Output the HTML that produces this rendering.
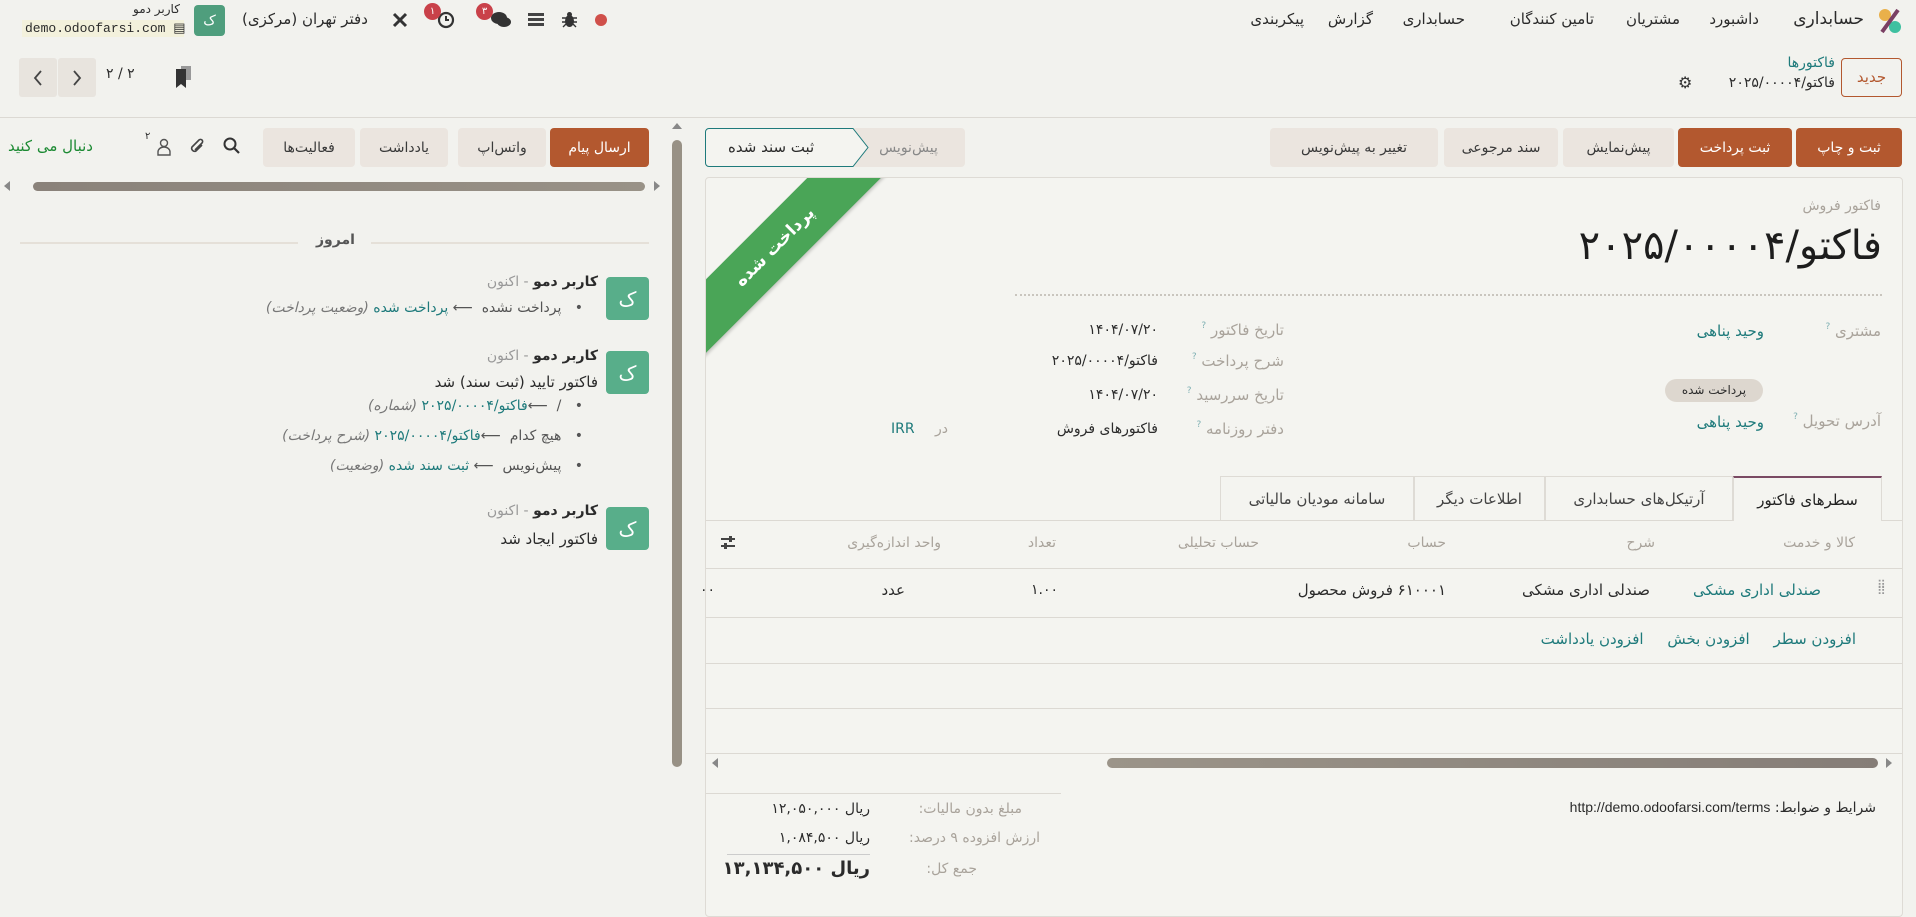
<!DOCTYPE html>
<html lang="fa"><head><meta charset="utf-8">
<style>
*{box-sizing:border-box;margin:0;padding:0}
body{width:1916px;height:895px;overflow:hidden;background:#f2f2ee;font-family:"DejaVu Sans","Liberation Sans",sans-serif;color:#2b2b2b;font-size:14px;position:relative}
.a{position:absolute;white-space:nowrap}
.r{direction:rtl}
.btn{position:absolute;height:39px;top:128px;border-radius:4px;background:#ebe5df;color:#3a3a3a;display:flex;align-items:center;justify-content:center;font-size:14px;direction:rtl;white-space:nowrap}
.pri{background:#b3582f;color:#fff}
.lbl{color:#a9a39b}
.q{color:#7fb0b3;font-size:9px;vertical-align:top}
.teal{color:#1e7a7b}
.line{position:absolute;height:1px;background:#dcd9d3}
.av{position:absolute;width:43px;height:43px;border-radius:4px;background:#58ae8a;color:#fff;font-size:20px;display:flex;align-items:center;justify-content:center}
.gray{color:#999}
.it{font-style:italic;color:#777}
</style></head><body>

<!-- top bar -->
<svg class="a" style="left:1878px;top:8px" width="24" height="26" viewBox="0 0 24 26"><circle cx="7" cy="7" r="6" fill="#e9b04a"/><circle cx="17" cy="19" r="6" fill="#3fc0a0"/><path d="M20 2 L4 24" stroke="#7a3f63" stroke-width="4"/></svg>
<div class="a r" style="right:52px;top:9px;font-size:17px">حسابداری</div>
<div class="a r" style="right:157px;top:10px;font-size:15px">داشبورد</div>
<div class="a r" style="right:236px;top:10px;font-size:15px">مشتریان</div>
<div class="a r" style="right:322px;top:10px;font-size:15px">تامین کنندگان</div>
<div class="a r" style="right:451px;top:10px;font-size:15px">حسابداری</div>
<div class="a r" style="right:543px;top:10px;font-size:15px">گزارش</div>
<div class="a r" style="right:612px;top:10px;font-size:15px">پیکربندی</div>

<div class="a" style="left:595px;top:14px;width:12px;height:12px;border-radius:50%;background:#d0504a"></div>
<svg class="a" style="left:562px;top:11px" width="15" height="17" viewBox="0 0 15 17"><ellipse cx="7.5" cy="10" rx="4.5" ry="6" fill="#333"/><circle cx="7.5" cy="3.5" r="2.5" fill="#333"/><path d="M0 7h15M0 11h15M1 16l3-3M14 16l-3-3" stroke="#333" stroke-width="1.4"/></svg>
<svg class="a" style="left:528px;top:12px" width="16" height="16" viewBox="0 0 16 16"><rect x="0" y="1" width="16" height="3" fill="#444"/><rect x="0" y="6" width="16" height="3" fill="#444"/><rect x="0" y="11" width="16" height="3" fill="#444"/></svg>
<svg class="a" style="left:490px;top:11px" width="22" height="18" viewBox="0 0 22 18"><ellipse cx="9" cy="7" rx="8" ry="6" fill="#333"/><ellipse cx="14" cy="11" rx="7" ry="5" fill="#333"/></svg>
<div class="a" style="left:476px;top:3px;width:17px;height:17px;border-radius:50%;background:#c94149;color:#fff;font-size:10px;text-align:center;line-height:17px">۳</div>
<svg class="a" style="left:437px;top:11px" width="18" height="18" viewBox="0 0 18 18"><circle cx="9" cy="9" r="7" fill="none" stroke="#333" stroke-width="2.2"/><path d="M9 5v4h3" stroke="#333" stroke-width="2" fill="none"/></svg>
<div class="a" style="left:424px;top:3px;width:17px;height:17px;border-radius:50%;background:#c94149;color:#fff;font-size:10px;text-align:center;line-height:17px">۱</div>
<svg class="a" style="left:391px;top:11px" width="18" height="18" viewBox="0 0 18 18"><path d="M3 3l12 12M15 3L3 15" stroke="#333" stroke-width="3"/></svg>
<div class="a r" style="left:242px;top:10px;font-size:15px">دفتر تهران (مرکزی)</div>
<div class="av" style="left:194px;top:5px;width:31px;height:31px;font-size:14px;background:#4f9e7d">ک</div>
<div class="a r" style="left:133px;top:2px;font-size:12px">کاربر دمو</div>
<div class="a" style="left:22px;top:20px;width:162px;height:17px;background:#f3f1dc;font-family:'Liberation Mono',monospace;font-size:13px;line-height:17px;padding-left:3px">demo.odoofarsi.com ▤</div>

<!-- second row -->
<div class="a" style="left:19px;top:58px;width:38px;height:39px;background:#e8e4de;border-radius:3px"></div>
<svg class="a" style="left:31px;top:69px" width="14" height="18" viewBox="0 0 14 18"><path d="M10 2L4 9l6 7" fill="none" stroke="#444" stroke-width="1.8"/></svg>
<div class="a" style="left:58px;top:58px;width:38px;height:39px;background:#e8e4de;border-radius:3px"></div>
<svg class="a" style="left:70px;top:69px" width="14" height="18" viewBox="0 0 14 18"><path d="M4 2l6 7-6 7" fill="none" stroke="#444" stroke-width="1.8"/></svg>
<div class="a" style="left:106px;top:66px;font-size:14px">۲ / ۲</div>
<svg class="a" style="left:175px;top:66px" width="18" height="22" viewBox="0 0 18 22"><rect x="6" y="0" width="10" height="14" fill="#999"/><path d="M1 3h10v19l-5-4-5 4z" fill="#333"/></svg>

<div class="a r" style="left:1841px;top:58px;width:61px;height:39px;border:1px solid #b3582f;border-radius:4px;color:#b3582f;text-align:center;line-height:37px;font-size:15px">جدید</div>
<div class="a r teal" style="right:81px;top:55px;font-size:14px">فاکتورها</div>
<div class="a r" style="right:81px;top:75px;font-size:14px">فاکتو/۲۰۲۵/۰۰۰۰۴</div>
<div class="a" style="left:1678px;top:73px;font-size:16px;color:#333">⚙</div>
<div class="line" style="left:0;top:117px;width:1916px"></div>

<!-- chatter -->
<div class="btn pri" style="left:550px;width:99px">ارسال پیام</div>
<div class="btn" style="left:458px;width:88px">واتس‌اپ</div>
<div class="btn" style="left:360px;width:88px">یادداشت</div>
<div class="btn" style="left:263px;width:92px">فعالیت‌ها</div>
<svg class="a" style="left:223px;top:137px" width="18" height="18" viewBox="0 0 18 18"><circle cx="7" cy="7" r="5.5" fill="none" stroke="#333" stroke-width="2"/><path d="M11 11l5 5" stroke="#333" stroke-width="2.2"/></svg>
<svg class="a" style="left:187px;top:136px" width="20" height="20" viewBox="0 0 20 20"><path d="M15 9l-6 6a3 3 0 0 1-4-4l7-7a2 2 0 0 1 3 3l-7 7" fill="none" stroke="#444" stroke-width="1.6"/></svg>
<svg class="a" style="left:155px;top:138px" width="18" height="18" viewBox="0 0 18 18"><circle cx="9" cy="5" r="3.5" fill="none" stroke="#555" stroke-width="1.4"/><path d="M3 17v-3a6 5 0 0 1 12 0v3z" fill="none" stroke="#555" stroke-width="1.4"/></svg>
<div class="a" style="left:145px;top:131px;font-size:10px">۲</div>
<div class="a r" style="left:8px;top:137px;font-size:15px;color:#1c8a33">دنبال می کنید</div>

<div class="a" style="left:4px;top:181px;width:0;height:0;border-top:5px solid transparent;border-bottom:5px solid transparent;border-right:6px solid #888"></div>
<div class="a" style="left:33px;top:182px;width:612px;height:9px;border-radius:5px;background:linear-gradient(90deg,#8a827a,#999287)"></div>
<div class="a" style="left:654px;top:181px;width:0;height:0;border-top:5px solid transparent;border-bottom:5px solid transparent;border-left:6px solid #888"></div>
<div class="a" style="left:672px;top:123px;width:0;height:0;border-left:5px solid transparent;border-right:5px solid transparent;border-bottom:6px solid #888"></div>
<div class="a" style="left:672px;top:140px;width:10px;height:627px;border-radius:5px;background:#989185"></div>

<div class="a" style="left:20px;top:242px;width:278px;height:2px;background:#e5e0d8"></div>
<div class="a" style="left:371px;top:242px;width:278px;height:2px;background:#e5e0d8"></div>
<div class="a r" style="left:316px;top:232px;font-size:14px;color:#555;font-weight:bold">امروز</div>

<div class="av" style="left:606px;top:277px">ک</div>
<div class="a r" style="right:1318px;top:274px;font-size:14px"><b>کاربر دمو</b> <span class="gray">- اکنون</span></div>
<div class="a r" style="right:1333px;top:300px;font-size:14px;color:#555">• &nbsp;&nbsp;پرداخت نشده &nbsp;⟵ <span class="teal">پرداخت شده</span> <span class="it">(وضعیت پرداخت)</span></div>

<div class="av" style="left:606px;top:351px">ک</div>
<div class="a r" style="right:1318px;top:348px;font-size:14px"><b>کاربر دمو</b> <span class="gray">- اکنون</span></div>
<div class="a r" style="right:1318px;top:373px;font-size:15px">فاکتور تایید (ثبت سند) شد</div>
<div class="a r" style="right:1333px;top:398px;font-size:14px;color:#555">• &nbsp;&nbsp;/ &nbsp;⟵<span class="teal">فاکتو/۲۰۲۵/۰۰۰۰۴</span> <span class="it">(شماره)</span></div>
<div class="a r" style="right:1333px;top:428px;font-size:14px;color:#555">• &nbsp;&nbsp;هیچ کدام &nbsp;⟵<span class="teal">فاکتو/۲۰۲۵/۰۰۰۰۴</span> <span class="it">(شرح پرداخت)</span></div>
<div class="a r" style="right:1333px;top:458px;font-size:14px;color:#555">• &nbsp;&nbsp;پیش‌نویس &nbsp;⟵ <span class="teal">ثبت سند شده</span> <span class="it">(وضعیت)</span></div>

<div class="av" style="left:606px;top:507px">ک</div>
<div class="a r" style="right:1318px;top:503px;font-size:14px"><b>کاربر دمو</b> <span class="gray">- اکنون</span></div>
<div class="a r" style="right:1318px;top:530px;font-size:15px">فاکتور ایجاد شد</div>

<!-- form buttons -->
<div class="btn pri" style="left:1796px;width:106px">ثبت و چاپ</div>
<div class="btn pri" style="left:1678px;width:114px">ثبت پرداخت</div>
<div class="btn" style="left:1563px;width:111px">پیش‌نمایش</div>
<div class="btn" style="left:1444px;width:114px">سند مرجوعی</div>
<div class="btn" style="left:1270px;width:168px">تغییر به پیش‌نویس</div>
<div class="btn" style="left:852px;width:113px;color:#888">پیش‌نویس</div>
<svg class="a" style="left:705px;top:128px" width="165" height="39" viewBox="0 0 165 39"><path d="M4 .5H148L163 19.5 148 38.5H4A3.5 3.5 0 0 1 .5 35V4A3.5 3.5 0 0 1 4 .5z" fill="#f4f4f0" stroke="#1e7a7b"/></svg>
<div class="a r" style="left:728px;top:138px;font-size:15px">ثبت سند شده</div>

<!-- sheet -->
<div class="a" style="left:705px;top:177px;width:1198px;height:740px;background:#f4f4f0;border:1px solid #dedbd5;border-radius:4px;overflow:hidden">
  <div class="a" style="left:-131px;top:43px;width:400px;height:52px;background:#4aa557;transform:rotate(-45deg);color:#fff;font-weight:bold;font-size:17px;text-align:center;line-height:52px;direction:rtl;box-shadow:0 2px 3px rgba(0,0,0,.2)">پرداخت شده</div>
</div>

<div class="a r lbl" style="right:35px;top:198px;font-size:14px">فاکتور فروش</div>
<div class="a r" style="right:34px;top:223px;font-size:40px;color:#1d1d1d">فاکتو/۲۰۲۵/۰۰۰۰۴</div>
<div class="a" style="left:1015px;top:294px;width:867px;border-top:2px dotted #c9c5be"></div>

<div class="a r lbl" style="right:35px;top:322px;font-size:15px">مشتری <span class="q">?</span></div>
<div class="a r teal" style="right:152px;top:322px;font-size:15px">وحید پناهی</div>
<div class="a r" style="left:1665px;top:379px;width:98px;height:23px;border-radius:12px;background:#ddd7cf;font-size:12px;text-align:center;line-height:23px">پرداخت شده</div>
<div class="a r lbl" style="right:35px;top:412px;font-size:15px">آدرس تحویل <span class="q">?</span></div>
<div class="a r teal" style="right:152px;top:413px;font-size:15px">وحید پناهی</div>

<div class="a r lbl" style="right:632px;top:321px;font-size:15px">تاریخ فاکتور <span class="q">?</span></div>
<div class="a r" style="right:758px;top:322px;font-size:14px">۱۴۰۴/۰۷/۲۰</div>
<div class="a r lbl" style="right:632px;top:352px;font-size:15px">شرح پرداخت <span class="q">?</span></div>
<div class="a r" style="right:758px;top:353px;font-size:14px">فاکتو/۲۰۲۵/۰۰۰۰۴</div>
<div class="a r lbl" style="right:632px;top:386px;font-size:15px">تاریخ سررسید <span class="q">?</span></div>
<div class="a r" style="right:758px;top:387px;font-size:14px">۱۴۰۴/۰۷/۲۰</div>
<div class="a r lbl" style="right:632px;top:420px;font-size:15px">دفتر روزنامه <span class="q">?</span></div>
<div class="a r" style="right:758px;top:421px;font-size:14px">فاکتورهای فروش</div>
<div class="a lbl" style="left:935px;top:421px;font-size:14px">در</div>
<div class="a teal" style="left:891px;top:421px;font-size:14px">IRR</div>

<!-- tabs -->
<div class="line" style="left:706px;top:520px;width:1196px"></div>
<div class="a r" style="left:1733px;top:476px;width:149px;height:45px;border:1px solid #dedbd5;border-top:2px solid #7a4a63;border-bottom:none;background:#f4f4f0;text-align:center;line-height:44px;font-size:15px;color:#222">سطرهای فاکتور</div>
<div class="a r" style="left:1545px;top:476px;width:188px;height:44px;border:1px solid #dedbd5;border-bottom:none;text-align:center;line-height:44px;font-size:15px;color:#444">آرتیکل‌های حسابداری</div>
<div class="a r" style="left:1414px;top:476px;width:131px;height:44px;border:1px solid #dedbd5;border-bottom:none;text-align:center;line-height:44px;font-size:15px;color:#444">اطلاعات دیگر</div>
<div class="a r" style="left:1220px;top:476px;width:194px;height:44px;border:1px solid #dedbd5;border-bottom:none;text-align:center;line-height:44px;font-size:15px;color:#444">سامانه مودیان مالیاتی</div>

<!-- table -->
<div class="a r lbl" style="right:61px;top:535px;font-size:14px">کالا و خدمت</div>
<div class="a r lbl" style="right:261px;top:535px;font-size:14px">شرح</div>
<div class="a r lbl" style="right:470px;top:535px;font-size:14px">حساب</div>
<div class="a r lbl" style="right:657px;top:535px;font-size:14px">حساب تحلیلی</div>
<div class="a r lbl" style="right:860px;top:535px;font-size:14px">تعداد</div>
<div class="a r lbl" style="right:975px;top:535px;font-size:14px">واحد اندازه‌گیری</div>
<svg class="a" style="left:721px;top:535px" width="14" height="16" viewBox="0 0 14 16"><path d="M0 4h14M0 11h14" stroke="#444" stroke-width="2"/><rect x="8" y="1" width="3" height="6" fill="#444"/><rect x="3" y="8" width="3" height="6" fill="#444"/></svg>
<div class="line" style="left:706px;top:568px;width:1196px"></div>
<div class="a" style="left:1877px;top:582px;color:#999;font-size:12px;line-height:6px">⠿<br>⠿</div>
<div class="a r teal" style="right:95px;top:581px;font-size:15px">صندلی اداری مشکی</div>
<div class="a r" style="right:266px;top:581px;font-size:15px">صندلی اداری مشکی</div>
<div class="a r" style="right:470px;top:581px;font-size:15px">۶۱۰۰۰۱ فروش محصول</div>
<div class="a" style="left:1031px;top:582px;font-size:14px">۱.۰۰</div>
<div class="a r" style="right:1011px;top:581px;font-size:15px">عدد</div>
<div class="a" style="left:700px;top:582px;font-size:14px">۰۰</div>
<div class="line" style="left:706px;top:617px;width:1196px"></div>
<div class="a r teal" style="right:60px;top:630px;font-size:15px">افزودن سطر &nbsp;&nbsp;&nbsp; افزودن بخش &nbsp;&nbsp;&nbsp; افزودن یادداشت</div>
<div class="line" style="left:706px;top:663px;width:1196px"></div>
<div class="line" style="left:706px;top:708px;width:1196px"></div>
<div class="line" style="left:706px;top:753px;width:1196px"></div>
<div class="a" style="left:712px;top:758px;width:0;height:0;border-top:5px solid transparent;border-bottom:5px solid transparent;border-right:6px solid #888"></div>
<div class="a" style="left:1107px;top:758px;width:771px;height:10px;border-radius:5px;background:linear-gradient(90deg,#9b9489,#857d77)"></div>
<div class="a" style="left:1886px;top:758px;width:0;height:0;border-top:5px solid transparent;border-bottom:5px solid transparent;border-left:6px solid #888"></div>

<!-- totals -->
<div class="line" style="left:706px;top:793px;width:355px"></div>
<div class="a r lbl" style="right:894px;top:801px;font-size:14px">مبلغ بدون مالیات:</div>
<div class="a r" style="right:1046px;top:801px;font-size:14px">ریال ۱۲,۰۵۰,۰۰۰</div>
<div class="a r lbl" style="right:876px;top:830px;font-size:14px">ارزش افزوده ۹ درصد:</div>
<div class="a r" style="right:1046px;top:830px;font-size:14px">ریال ۱,۰۸۴,۵۰۰</div>
<div class="line" style="left:727px;top:854px;width:143px;background:#ccc"></div>
<div class="a r lbl" style="right:939px;top:861px;font-size:14px">جمع کل:</div>
<div class="a r" style="right:1046px;top:858px;font-size:18px;font-weight:bold">ریال ۱۳,۱۳۴,۵۰۰</div>
<div class="a r" style="right:40px;top:799px;font-size:14px">شرایط و ضوابط: <span style="font-family:'Liberation Sans',sans-serif">http://demo.odoofarsi.com/terms</span></div>

</body></html>
